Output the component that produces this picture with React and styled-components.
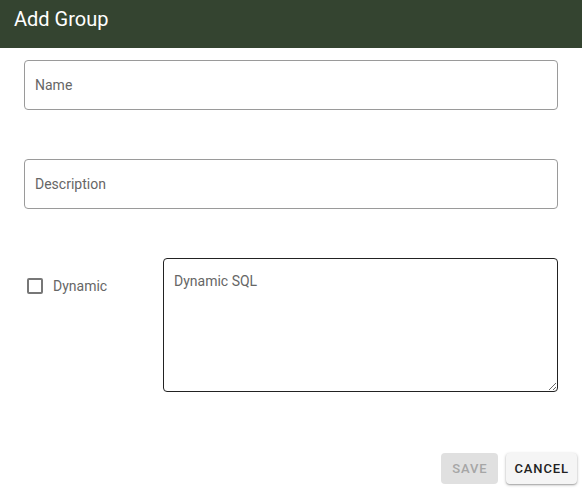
import React, { useState } from "react";
import styled, { createGlobalStyle } from "styled-components";

const GlobalStyle = createGlobalStyle`
  body {
    margin: 0;
    background: #ffffff;
    font-family: Roboto, "Liberation Sans", Arial, sans-serif;
  }
`;

export default function App() {
  const [name, setName] = useState("");
  const [description, setDescription] = useState("");
  const [dynamic, setDynamic] = useState(false);
  const [sql, setSql] = useState("");

  return (
    <Dialog>
      <GlobalStyle />
      <Header>Add Group</Header>
      <Form>
        <TextField
          type="text"
          placeholder="Name"
          value={name}
          onChange={(e) => setName(e.target.value)}
        />
        <TextField
          type="text"
          placeholder="Description"
          value={description}
          onChange={(e) => setDescription(e.target.value)}
        />
        <DynamicRow>
          <CheckLabel>
            <Box
              type="checkbox"
              checked={dynamic}
              onChange={(e) => setDynamic(e.target.checked)}
            />
            Dynamic
          </CheckLabel>
          <SqlArea
            placeholder="Dynamic SQL"
            value={sql}
            onChange={(e) => setSql(e.target.value)}
          />
        </DynamicRow>
      </Form>
      <Actions>
        <Button disabled>Save</Button>
        <Button $raised>Cancel</Button>
      </Actions>
    </Dialog>
  );
}

const Dialog = styled.div`
  width: 582px;
  height: 489px;
  background: #ffffff;
`;

const Header = styled.div`
  height: 48px;
  padding: 0 14px;
  line-height: 38px;
  box-sizing: border-box;
  background-color: #344430;
  color: #ffffff;
  font-size: 20px;
  font-weight: 400;
`;

const Form = styled.div`
  display: flex;
  flex-direction: column;
  gap: 49px;
  padding: 12px 24px 0;
`;

const TextField = styled.input`
  box-sizing: border-box;
  width: 100%;
  height: 50px;
  padding: 0 10px;
  border: 1px solid #9a9a9a;
  border-radius: 4px;
  font-family: inherit;
  font-size: 14px;
  color: #222;
  &::placeholder {
    color: #666666;
  }
  &:focus {
    outline: none;
    border-color: #344430;
  }
`;

const DynamicRow = styled.div`
  display: flex;
  align-items: flex-start;
`;

const CheckLabel = styled.label`
  width: 139px;
  flex-shrink: 0;
  display: flex;
  align-items: center;
  gap: 10px;
  padding: 20px 0 0 3px;
  box-sizing: border-box;
  font-size: 14px;
  color: #666666;
  cursor: pointer;
`;

const Box = styled.input`
  appearance: none;
  margin: 0;
  width: 16px;
  height: 16px;
  box-sizing: border-box;
  border: 2px solid #777777;
  border-radius: 2px;
  cursor: pointer;
  &:checked {
    background: #344430;
    border-color: #344430;
  }
`;

const SqlArea = styled.textarea`
  flex: 1;
  box-sizing: border-box;
  height: 134px;
  padding: 14px 10px;
  border: 1px solid #222222;
  border-radius: 4px;
  font-family: inherit;
  font-size: 14px;
  color: #222;
  &::placeholder {
    color: #666666;
  }
  &:focus {
    outline: none;
  }
`;

const Actions = styled.div`
  display: flex;
  justify-content: flex-end;
  gap: 8px;
  margin-top: 61px;
  padding: 0 5px;
`;

const Button = styled.button`
  min-width: 57px;
  height: 31px;
  padding: 0 8px;
  border: none;
  border-radius: 4px;
  font-family: inherit;
  font-size: 13px;
  font-weight: 500;
  letter-spacing: 0.9px;
  text-transform: uppercase;
  background-color: ${(p) => (p.$raised ? "#f5f5f5" : "#e0e0e0")};
  color: #222222;
  box-shadow: ${(p) =>
    p.$raised ? "0 1px 3px rgba(0, 0, 0, 0.3), 0 1px 1px rgba(0,0,0,0.14)" : "none"};
  cursor: pointer;
  &:disabled {
    color: #a6a6a6;
    cursor: default;
  }
`;
